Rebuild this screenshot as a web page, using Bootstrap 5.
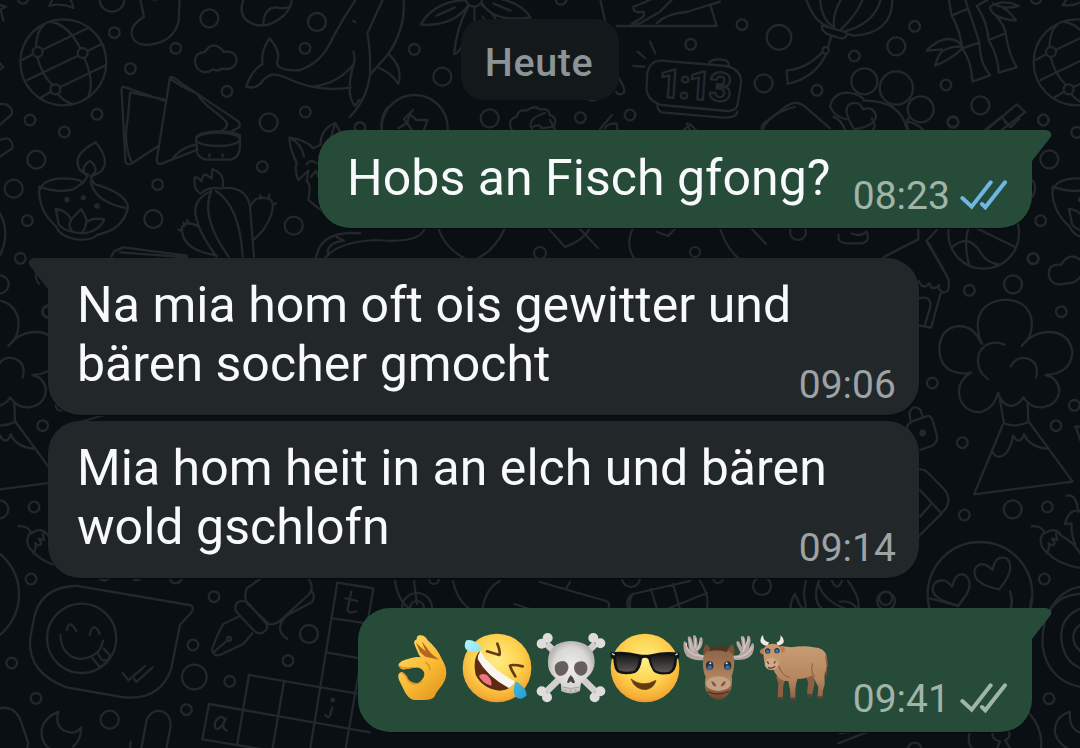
<!DOCTYPE html>
<html lang="de">
<head>
<meta charset="utf-8">
<meta name="viewport" content="width=device-width, initial-scale=1">
<title>Chat</title>
<link href="https://cdn.jsdelivr.net/npm/bootstrap@5.3.0/dist/css/bootstrap.min.css" rel="stylesheet">
<style>
  body { background: #0a0f13; font-family: Roboto, "Noto Sans", sans-serif; }
  .chat { width: 1080px; height: 748px; padding: 19px 48px 0; }
  .wallpaper { position: absolute; inset: 0; z-index: 0; }
  .chat > :not(.wallpaper) { z-index: 1; }
  .day { width: 158px; height: 81px; margin-left: 413px; border-radius: 23px; background: #13181b; color: #8b9498; font-size: 39.5px; font-weight: 500; letter-spacing: .6px; padding: 6px 2px 0 0; }
  .bubble { border-radius: 32px; color: #f7f9fa; font-size: 50px; letter-spacing: .04px; line-height: 59px; padding: 18px 23px 6px 29px; box-shadow: 0 1px 1px #070b0e; }
  .incoming { width: 871px; height: 157px; background: #22272a; }
  .outgoing { background: #274b39; }
  .tail-right { border-top-right-radius: 0; }
  .tail-left { border-top-left-radius: 0; }
  .tail { position: absolute; top: 0; }
  .tail-right .tail { left: calc(100% - 1px); }
  .tail-left .tail { right: calc(100% - 1px); }
  .clock-time { font-size: 39px; line-height: 47px; color: #9da2a5; }
  .incoming .clock-time { margin: 0 23px 6px 0; }
  .outgoing .clock-time { color: #a0b5a9; }
  .first-out { width: 714px; height: 98px; margin: 30px 0 30px; padding: 19px 24px 8px 29px; }
  .emoji-out { width: 674px; height: 124px; margin-top: 30px; padding: 22px 24px 9px 27px; }
  .ticks { margin-bottom: 5px; }
  .read { color: #6fb6e2; } .sent { color: #a0b5a9; }
</style>
</head>
<body class="m-0 overflow-hidden">
<main class="chat position-relative overflow-hidden d-flex flex-column">

<svg class="wallpaper" width="1080" height="748" viewBox="0 0 1080 748" fill="none" stroke="#24282c" stroke-width="6.9" stroke-linecap="round" stroke-linejoin="round" aria-hidden="true">
 <defs>
  <g id="globe"><circle cx="190" cy="187" r="129"/><circle cx="113" cy="156" r="15"/><circle cx="248" cy="159" r="15"/><circle cx="166" cy="268" r="15"/><path d="M68 179L98 163M128 149L262 85M82 240L234 167M262 153L304 133M122 293L152 275M181 261L314 197M108 141Q110 90 134 72M155 66Q205 75 241 145M112 171Q125 225 158 255M253 174Q285 245 264 292M174 282Q190 305 220 312"/></g>
  <g id="volcano"><path d="M244 340Q222 290 180 288Q120 292 118 358Q120 424 184 430Q202 431 213 427Q166 458 180 506Q198 550 244 546Q284 532 294 488Q304 524 334 528Q360 522 370 502Q392 534 426 532Q474 526 478 480Q472 442 437 435Q514 430 517 366Q508 304 440 306Q392 310 365 348Q402 320 394 264Q380 210 314 209Q238 216 233 282Q234 318 246 341M315 344Q260 324 237 370Q224 420 264 447M332 409Q350 376 384 386Q420 400 408 442M300 510L312 580Q348 594 385 576L383 520M308 585L222 793L518 755L387 576M277 664Q286 686 306 678Q330 668 339 616Q348 632 356 632Q368 630 372 612Q386 650 441 656"/></g>
  <g id="chili"><path d="M395 889Q425 886 434 910Q464 888 484 917Q542 948 562 1016Q480 1010 440 966Q420 950 422 928Q426 908 436 908M440 970Q450 955 446 940Q460 952 464 940L456 926L472 930L468 912"/></g>
  <g id="bowl"><path d="M118 575Q125 536 190 535Q240 536 247 548Q262 535 264 524Q230 515 233 482Q235 455 287 427Q320 466 314 495Q306 522 272 528Q276 546 286 553Q380 580 384 622Q370 690 290 705Q280 722 230 718Q180 710 169 680Q112 630 118 560Q170 580 220 568L252 546M272 545Q285 605 376 624M259 526Q240 508 263 487L271 483Q292 500 285 518L276 526M167 626Q200 632 214 658L243 627Q262 656 259 666Q280 652 313 658Q298 694 250 700Q190 696 176 672ZM214 658Q200 688 224 697M259 666Q256 688 246 697"/><g fill="#24282c" stroke="none"><circle cx="201" cy="599" r="8"/><circle cx="250" cy="593" r="8"/><circle cx="291" cy="618" r="8"/></g></g>
 </defs>

 <!-- upper left: globe, sandwiches, lamp, cactus, whale -->
 <g transform="scale(.33333)">
  <use href="#globe"/><use href="#bowl"/>
  <circle cx="343" cy="98" r="16"/><circle cx="336" cy="-2" r="37"/><circle cx="69" cy="-5" r="16"/><circle cx="391" cy="206" r="16"/><circle cx="527" cy="145" r="16"/><circle cx="628" cy="55" r="27"/><circle cx="681" cy="274" r="16"/><circle cx="806" cy="367" r="27"/><circle cx="915" cy="145" r="16"/><circle cx="951" cy="66" r="27"/><circle cx="916" cy="336" r="16"/><circle cx="291" cy="343" r="16"/><circle cx="90" cy="360" r="16"/><circle cx="193" cy="396" r="16"/><circle cx="109" cy="479" r="27"/><circle cx="41" cy="566" r="27"/><circle cx="82" cy="662" r="16"/><circle cx="473" cy="554" r="16"/><circle cx="460" cy="657" r="27"/><circle cx="787" cy="500" r="16"/><circle cx="881" cy="677" r="27"/><circle cx="61" cy="775" r="16"/><circle cx="1080" cy="383" r="16"/>
  <path d="M148 18Q184 8 220 24Q216 4 208-8M148 18L160-8M0 15L18 20L2 28L10 62M0 190L10 202L-10 215M0 312Q20 310 28 320Q40 330 34 344L0 374M0 420Q22 410 30 420Q42 432 36 446L0 470M0 640Q32 700 0 765"/>
  <path d="M420-5L432 50Q390 75 395 105Q406 140 450 134Q520 126 536 64L539-5M450-5Q465 2 480-5"/>
  <path d="M586 190Q580 160 614 156Q640 116 672 156Q708 150 710 182Q704 212 665 206Q655 216 640 208Q610 228 590 202Z"/>
  <path d="M732-5Q710 50 755 70Q800 90 850 48Q874 25 876-5M790 72Q792 22 830 22Q858 28 868 20"/>
  <path d="M739 260Q755 210 788 192Q780 160 808 115Q846 155 830 190Q840 215 900 210Q960 190 990 130Q1025 60 1072-8M739 260Q770 270 790 240Q815 212 855 232Q950 280 1052 262M940 260Q1020 248 1062 190Q1066 170 1060 155M1062 190Q1034 280 1065 318L1078 300"/>
  <path d="M495 299L390 277Q384 360 380 375Q372 440 396 490L475 438M495 303L370 260Q362 260 366 290L376 484Q380 498 395 490M510 232L470 480Q470 494 485 491L590 450M510 232Q518 226 540 247L712 362Q726 374 714 384L695 394M512 236Q540 260 590 280Q610 310 636 328Q690 370 680 374Q680 390 650 398M520 472Q550 440 588 434"/>
  <ellipse cx="654" cy="418" rx="66" ry="20"/><path d="M588 418Q588 395 654 394Q720 394 720 412M588 420L592 460Q600 480 630 479H690Q718 476 720 440V405M628 463V470M668 463V470"/>
  <path d="M634 573Q575 600 588 650Q598 700 650 770M660 565Q740 556 750 620L762 770M634 573Q600 650 686 770M648 573Q720 620 728 770M600 580Q580 570 584 532Q598 532 604 544Q610 518 620 525L635 536L637 507Q676 520 668 558M750 623Q765 580 812 599Q832 625 790 690L762 718M780 585L783 596M808 583L806 595M828 610L819 613M592 678Q560 660 546 682Q542 750 650 766M561 661L567 671M550 668L553 678M535 689L544 692M604 580Q622 560 660 565"/>
  <path d="M912 470Q905 430 868 413Q870 450 890 488Q882 510 895 540L925 512L920 545Q935 550 925 600Q950 620 975 640M868 413Q920 420 940 445L962 434Q960 390 1005 368L1020 395M1005 372Q990 420 985 440M920 492Q932 476 950 490M933 530L948 512L955 530M948 775Q960 690 1080 700M1010 711L1032 722Q975 730 985 765M334 770L342 754L370 742L560 767V775M360 757L560 772"/>
 </g>

 <!-- top centre: flower, star, clock -->
 <g transform="translate(360 0) scale(.33333)">
  <path d="M130-5Q140 80 85 162L30 224Q32 150 22 100L70-5M30 224Q20 300-30 350M85 162Q130 200 115 252Q95 220 58 204M-20 62L-15 66"/>
  <circle cx="163" cy="148" r="16"/><circle cx="247" cy="230" r="27"/><circle cx="603" cy="-2" r="16"/><circle cx="992" cy="133" r="16"/><circle cx="389" cy="355" r="27"/><circle cx="661" cy="353" r="16"/><circle cx="810" cy="345" r="16"/><circle cx="0" cy="383" r="16"/><circle cx="342" cy="-5" r="25"/><circle cx="164" cy="384" r="99"/>
  <path d="M316 0Q220 5 182 74Q280 80 326 15M365 7Q400 70 512 52Q480 5 410-5M343 20V65M325 20Q290 80 282 162Q300 160 320 110M365 15Q400 40 410 62M230 47L285 22M400 10L452 32M368 50L378 65"/>
  <path d="M115 385L142 368L148 342L170 360L203 360L192 390M455 390Q440 360 470 350Q476 326 500 332Q520 314 540 328Q570 324 568 344Q596 354 580 380L545 385Q540 370 520 380M735 385Q740 370 770 370L772 390M980 370L990 390"/>
  <path d="M720-5L735 62M770 78H1070L1052 18M820 20Q850 10 880-5M820 20Q820 42 850 35Q860 50 825 65Q800 80 840 70L900 35L940-5M890 70Q920 40 980 36L1080 5M776 235Q800 270 790 280Q775 288 768 275M680 295Q695 307 710 297"/>
  <path d="M870 125L886 160M833 155L855 174M820 198L854 200M905 182L1098 198Q1146 207 1143 252L1132 318Q1124 334 1100 333L905 315Q856 300 860 256L862 218Q872 180 905 182ZM892 317Q894 334 906 337L1080 352Q1130 356 1132 335M1048 187Q1060 174 1094 180Q1108 184 1106 198"/>
  <text x="0" y="0" transform="translate(893 290) rotate(4)" font-family="Roboto, sans-serif" font-size="120" font-weight="700" textLength="220">1:13</text>
 </g>

 <!-- upper right: lantern, bamboo, flower and globe -->
 <g transform="translate(720 0) scale(.33333)">
  <circle cx="66" cy="74" r="16"/><circle cx="177" cy="112" r="37"/><circle cx="131" cy="250" r="27"/><circle cx="291" cy="271" r="16"/><circle cx="403" cy="168" r="16"/><circle cx="529" cy="139" r="27"/><circle cx="584" cy="79" r="16"/><circle cx="678" cy="255" r="16"/><circle cx="781" cy="316" r="27"/><circle cx="699" cy="365" r="16"/><circle cx="948" cy="-5" r="16"/><circle cx="970" cy="360" r="16"/>
  <path d="M258-5Q280 65 325 80M300-5Q305 60 338 78M365-5Q335 45 343 82M430-5Q410 45 362 89M483-5Q465 70 375 94M517-5Q520 100 400 107L378 100M306 76Q300 100 350 111Q374 122 381 103L375 96Q320 80 306 76ZM333 112L324 142M306 158Q260 206 200 212L203 252Q285 234 318 163M124 385Q126 370 145 360L200 318Q230 298 255 320L330 385M330 318Q340 280 378 278Q410 278 430 296M330 318Q340 350 380 358M430 302Q540 300 560 385M565 365Q590 370 610 390"/>
  <circle cx="317" cy="151" r="10"/><circle cx="433" cy="244" r="39"/><circle cx="529" cy="264" r="50"/><circle cx="602" cy="328" r="39"/>
  <path d="M403 388Q360 320 396 310Q420 304 429 328Q460 318 468 346Q468 378 403 388M686-5L695 47L744 26L735-5M695 47Q720 90 727 145L778 128Q765 85 744 26M727 145Q755 185 757 245L810 226Q780 190 778 128M620 152Q670 100 715 125L727 140M620 152L665 148M727 140Q690 138 665 155Q655 165 645 197Q690 180 727 145M770 18L810-5M770 18Q800 60 806 120L857 100Q853 75 830 50M806 120Q835 170 836 218L890 202Q865 160 857 100M810 20Q850-5 897 18Q850 30 820 10M810 25Q820 55 888 62Q865 25 830 15"/>
  <path d="M800 390L890 313L916 336L845 390M845 350L868 378M1030 15Q1060 20 1085 5M1028 15L1045-10"/>
 </g>
 <use href="#globe" transform="translate(1013.3) scale(.33333)"/>

 <!-- right column: ball, cloud, tree and smile -->
 <g transform="translate(820 120) scale(.33333)"><circle cx="688" cy="118" r="27"/><circle cx="662" cy="302" r="16"/><circle cx="640" cy="416" r="16"/><circle cx="399" cy="7" r="16"/><circle cx="670" cy="0" r="16"/><circle cx="770" cy="37" r="16"/><circle cx="491" cy="340" r="106"/><path d="M75 30Q65 0 40-10M160 28Q170 15 155-5M265 30Q255 5 265-5M495 30L545-10M555 5L572 22L598-5M56 345Q50 370 85 370H125Q152 365 140 335Q120 352 95 340M470 325L584 380M445 325Q430 370 448 438M398 380Q445 340 480 395Q500 430 540 434M636 180Q655 200 636 232M295 325V358L190 412M320 362L350 330M320 365L370 448"/></g>
 <g transform="translate(1013.3) scale(.33333)"><use href="#bowl"/></g>
 <g transform="translate(900 230) scale(.33333)">
  <use href="#volcano"/><use href="#chili"/>
  <circle cx="399" cy="86" r="16"/><circle cx="339" cy="163" r="27"/><circle cx="208" cy="181" r="16"/><circle cx="484" cy="245" r="16"/><circle cx="97" cy="459" r="16"/><circle cx="187" cy="638" r="16"/><circle cx="523" cy="526" r="16"/><circle cx="468" cy="587" r="16"/><circle cx="193" cy="855" r="16"/><circle cx="338" cy="838" r="27"/><circle cx="442" cy="831" r="16"/><circle cx="433" cy="1047" r="16"/><circle cx="240" cy="1093" r="157"/>
  <path d="M-10 60L52 30M85 38L144 145Q154 185 130 188Q108 175 118 165Q96 186 88 160Q70 182 56 153M122 190L93 293L56 286M75 285L91 230Q94 196 56 205M548 95Q510 60 483 104Q442 100 447 138Q456 172 500 160Q524 162 540 142M32 575L28 550Q38 520 62 540L67 558M24 600Q15 586 36 575L78 559Q92 553 98 572L110 615Q116 636 95 648L60 660M60 718Q78 718 90 735L130 775Q156 805 138 835L125 850L55 920M60 780L124 850M60 860L94 822M527 590L548 650M525 590H548M500 797Q530 790 534 845M494 882Q510 830 545 845M494 882L515 880Q512 910 526 945M298 1078Q210 1060 226 1015Q245 988 278 1020Q285 974 320 985Q350 1015 298 1078ZM175 1126Q80 1105 102 1062Q130 1036 156 1070Q168 1022 196 1036Q230 1065 175 1126ZM330 1084Q338 1105 333 1138M450 1138Q488 1075 545 1070"/>
  <circle cx="68" cy="609" r="7" fill="#24282c"/>
 </g>

 <!-- left edge -->
 <g transform="translate(-113.3 230) scale(.33333)"><use href="#volcano"/><use href="#chili"/><circle cx="339" cy="163" r="27"/><circle cx="484" cy="245" r="16"/><circle cx="523" cy="526" r="16"/><circle cx="468" cy="587" r="16"/><circle cx="338" cy="838" r="27"/><circle cx="442" cy="831" r="16"/><circle cx="433" cy="1047" r="16"/><circle cx="240" cy="1093" r="157"/></g>
 <path stroke-width="2.2" d="M62 427L108 414M39 284Q34 278 37 272M48 305Q42 307 42 312Q43 317 48 318"/>

 <!-- lower left: speech bubble, pen, crossword, moon -->
 <g transform="translate(0 570) scale(.33333)">
  <circle cx="35" cy="279" r="16"/><circle cx="108" cy="385" r="16"/><circle cx="527" cy="22" r="18"/><circle cx="642" cy="80" r="16"/><circle cx="579" cy="225" r="16"/><circle cx="583" cy="321" r="37"/><circle cx="689" cy="334" r="16"/><circle cx="559" cy="419" r="16"/><circle cx="329" cy="449" r="27"/><circle cx="864" cy="272" r="16"/><circle cx="927" cy="192" r="27"/><circle cx="245" cy="205" r="104"/>
  <path d="M220 48Q115 55 100 155L90 210Q85 310 200 352L365 381Q480 395 514 295L540 165L576 125Q584 108 568 105L240 49Q230 47 220 48ZM181 195Q185 260 240 267Q300 262 309 212M200 180Q208 145 229 183M269 194Q282 150 299 192M277 264L297 288M293 248Q305 278 317 270M311 236L329 255Q328 280 297 290M368 309L385 331L435 288M402 326L409 336L458 292M300 27Q315 36 325 27M400 27Q410 33 420 27"/>
  <path d="M740 55Q728 90 750 108L806 162Q825 168 848 145L930 70Q942 52 926 25M740 55L780 27M710 100Q725 85 745 100L798 160Q808 176 790 187Q776 196 760 180L712 128Q700 115 710 100ZM715 140L670 162Q650 195 636 240Q640 260 660 255L730 222L757 190M640 248L683 210M932 60Q950 78 935 97L858 138Q820 180 862 206"/><circle cx="687" cy="207" r="6"/>
  <path d="M125 495Q120 450 175 425Q160 480 215 488Q235 486 243 472Q245 505 220 530M125 495Q130 525 150 537M-5 415Q45 405 63 455L85 520L80 540M423 540L440 450Q455 415 490 425Q518 440 510 480L498 540M392 516L390 540"/>
  <path d="M1012 38L930 540M1120 57L1036 540M1012 38L1115 54M998 145L1100 160M979 247L1080 265M747 315L1085 373M627 402L1110 487M607 508L800 540M747 315L712 520M852 335L817 540M627 402L607 508"/>
  <path d="M1054 64L1042 120Q1046 132 1068 124M1036 85L1072 93M997 412L990 437Q984 446 976 435M672 446Q660 432 646 455Q640 480 656 476Q670 466 678 445Q660 472 680 482"/><circle cx="998" cy="390" r="4"/>
 </g>

 <!-- bands between the message bubbles -->
 <g stroke-width="2.2"><path d="M395 581Q398 604 416 613M414 581L417 604M453 581Q458 607 482 615M482 614Q484 589 500 581M540 582L606 601Q612 604 607 610L600 616M570 582L566 589M514 604L565 620M629 612Q624 598 633 594L690 581M633 594Q627 602 632 616M651 589L659 616M673 584L682 616M635 622L707 593M700 581Q711 598 706 611M792 616Q788 604 795 594Q803 615 806 606Q802 594 806 581M819 581Q810 605 828 612M818 583Q824 601 844 608L852 616M832 581Q837 592 842 581M848 581Q864 602 856 616"/><circle cx="417" cy="608" r="15"/><circle cx="417" cy="608" r="7"/><circle cx="762" cy="586" r="9"/><circle cx="886" cy="601" r="9"/><circle cx="730" cy="614" r="5"/><circle cx="631" cy="578" r="9"/><circle cx="718" cy="578" r="5"/><circle cx="434" cy="579" r="5"/>
 <path d="M325 258Q338 242 375 240Q420 244 425 228M438 228Q445 248 464 258M505 228Q495 250 478 258M548 228L565 247Q584 240 590 228M579 228L598 248M633 228Q625 245 634 258M657 232L668 236L676 228M720 228Q725 246 738 258M751 228L766 244"/><circle cx="798" cy="232" r="8"/><circle cx="540" cy="253" r="6"/><circle cx="695" cy="252" r="5"/>
 <path d="M382 130Q379 118 388 107M412 130L404 119L413 110M532 129Q526 119 545 113M555 130L550 120M600 129L612 115M684 130L690 124L696 130M763 129Q770 113 795 107"/></g>

 <!-- lower right -->
 <g transform="translate(840 600) scale(.33333)"><circle cx="627" cy="296" r="16"/><circle cx="137" cy="-5" r="20"/><circle cx="224" cy="448" r="20"/><path d="M740-20Q600-20 608 140Q625 250 740 264M740 20Q660 40 664 118Q672 195 740 210M720 75Q690 95 705 135L722 155M690 335Q642 350 645 400Q655 430 680 444M690 335Q685 400 740 400M568 340Q610 390 603 444M388 400Q382 430 396 444M460 396Q450 415 480 425L472 444M505 390Q515 415 495 420L510 444M-5 430L85 395M0 400L28 396M270-5L355 18L370-5M515-5Q518 10 512 24M575-5Q570 10 572 24M0 5Q30 0 48 22"/></g>
</svg>

<div class="day position-relative d-flex align-items-center justify-content-center flex-shrink-0">Heute</div>

<section class="bubble outgoing first-out tail-right position-relative align-self-end d-flex justify-content-between align-items-end flex-shrink-0">
  <div class="align-self-start text-nowrap">Hobs an Fisch gfong?</div>
  <div class="d-flex align-items-center gap-2 read"><span class="clock-time">08:23</span>
  <svg class="ticks" width="50" height="32" viewBox="0 0 150 96" fill="none" stroke="currentColor" stroke-width="12"><path d="M13 60L41 86L98 13M72 78L82 88L141 13" stroke-linecap="round"/></svg></div>
  <svg class="tail" width="22" height="32" viewBox="0 0 22 32" fill="#274b39"><path d="M0 0H15Q23 2 19 8L1 31H0Z"/></svg>
</section>

<section class="bubble incoming tail-left position-relative d-flex justify-content-between align-items-end flex-shrink-0">
  <div class="align-self-start text-nowrap">Na mia hom oft ois gewitter und<br>bären socher gmocht</div>
  <span class="clock-time position-absolute bottom-0 end-0">09:06</span>
  <svg class="tail" width="22" height="32" viewBox="0 0 22 32" fill="#22272a"><path d="M22 0H7Q-1 2 3 8L21 31H22Z"/></svg>
</section>

<section class="bubble incoming position-relative d-flex flex-shrink-0" style="margin-top:6px">
  <div class="text-nowrap">Mia hom heit in an elch und bären<br>wold gschlofn</div>
  <span class="clock-time position-absolute bottom-0 end-0">09:14</span>
</section>

<section class="bubble outgoing emoji-out tail-right position-relative align-self-end d-flex justify-content-between align-items-end flex-shrink-0">
  <div class="d-flex align-self-start">
   <!-- OK hand -->
   <svg width="74" height="76" viewBox="15 30 222 228" role="img" aria-label="OK-Hand"><defs><linearGradient id="hand" x1="0" y1="0" x2=".7" y2="1"><stop stop-color="#ffd967"/><stop offset=".6" stop-color="#fbbd35"/><stop offset="1" stop-color="#e79b20"/></linearGradient></defs><path fill-rule="evenodd" d="M117 105L105 77Q98 62 110 58Q110 44 122 46Q135 46 143 61Q172 85 187 120Q199 139 199 161Q197 184 179 205Q168 218 163 231Q155 240 132 240H101Q83 235 72 211L57 180Q50 160 64 156Q74 157 80 173Q95 192 117 188Q134 175 133 160Q132 149 116 143Q100 142 77 148Q60 151 55 135Q57 122 94 114Q111 110 122 112Z" fill="url(#hand)"/><path d="M57 138Q70 149 98 142M66 158Q80 165 85 184Q104 200 126 184M137 127Q154 139 148 151" fill="none" stroke="#d98f2b" stroke-width="4"/><path d="M108 68L120 96L136 110L178 119Q154 105 141 84L125 64Q132 84 138 94Q124 84 108 68Z" fill="#b4651f"/></svg>
   <!-- laughing face -->
   <svg width="74" height="76" viewBox="237 30 222 228" role="img" aria-label="Lachen"><defs><radialGradient id="sun" cx=".5" cy=".38" r=".65"><stop stop-color="#ffed85"/><stop offset=".55" stop-color="#fdd14d"/><stop offset=".87" stop-color="#f6ad34"/><stop offset="1" stop-color="#e88d26"/></radialGradient><linearGradient id="tear" x2="1" y2="1"><stop stop-color="#b2f4ff"/><stop offset=".5" stop-color="#61cfe9"/><stop offset="1" stop-color="#259dd0"/></linearGradient></defs><circle cx="351" cy="144" r="103" fill="url(#sun)"/><path d="M298 94Q335 154 403 188Q390 211 359 212Q306 205 287 164Q277 119 298 94Z" fill="#5d2a14"/><path d="M301 93Q293 104 293 117Q320 168 386 204Q399 200 405 184Q334 148 301 93Z" fill="#f8f5ef"/><path d="M297 168Q303 159 320 164Q337 178 334 197Q307 191 297 168Z" fill="#ed7781"/><path d="M321 94L358 105Q362 96 352 71M428 139Q399 132 390 137Q393 148 406 169" fill="none" stroke="#683916" stroke-width="8" stroke-linecap="round" stroke-linejoin="round"/><path d="M307 85Q281 54 259 61Q247 82 265 94Q283 101 307 85ZM407 184Q439 202 440 225Q424 244 407 231Q395 218 407 184Z" fill="url(#tear)"/></svg>
   <!-- skull and crossbones -->
   <svg width="74" height="76" viewBox="459 30 222 228" role="img" aria-label="Totenkopf"><defs><radialGradient id="bone"><stop stop-color="#f0eeec"/><stop offset=".75" stop-color="#dad8d5"/><stop offset="1" stop-color="#b8b7b3"/></radialGradient></defs><g fill="none" stroke="#d2cfcc" stroke-width="20"><path d="M500 72L646 214M646 72L500 214"/></g><g fill="#dfdddb"><circle cx="503" cy="54" r="15"/><circle cx="485" cy="71" r="15"/><circle cx="640" cy="54" r="15"/><circle cx="661" cy="70" r="15"/><circle cx="485" cy="214" r="15"/><circle cx="501" cy="232" r="15"/><circle cx="661" cy="214" r="15"/><circle cx="644" cy="232" r="15"/></g><path d="M504 126Q502 67 573 63Q644 67 644 126Q644 154 622 172Q606 180 602 194L600 213Q574 227 544 214L543 194Q538 180 523 172Q502 154 504 126Z" fill="url(#bone)"/><g fill="#675f5d"><path d="M524 143Q525 123 551 123Q566 127 565 145Q561 166 540 168Q524 163 524 143Z"/><path d="M582 144Q582 123 607 124Q625 128 622 151Q615 169 600 167Q584 162 582 144Z"/><path d="M572 165Q563 175 561 187Q565 192 572 184Q580 194 585 187Q583 174 572 165Z" fill="#494341"/></g><path d="M548 201Q572 210 598 201M557 207V218M572 208V221M587 207V218" stroke="#aba39e" stroke-width="3" fill="none"/></svg>
   <!-- sunglasses face -->
   <svg width="74" height="76" viewBox="21 30 222 228" role="img" aria-label="Sonnenbrille"><defs><linearGradient id="lens" x2="0" y2="1"><stop stop-color="#191919"/><stop offset="1" stop-color="#5a5754"/></linearGradient></defs><circle cx="135" cy="144" r="103" fill="url(#sun)"/><path d="M31 98Q74 91 116 103Q135 106 154 103Q194 92 238 98V112L231 117Q230 155 209 162Q171 167 160 154Q149 137 145 117Q136 110 126 116Q122 151 105 159Q72 167 52 157Q42 149 40 118L32 112Z" fill="#111416"/><path d="M48 108Q84 101 116 112Q115 148 98 154Q70 158 57 151Q49 142 48 108ZM153 112Q190 100 223 108Q223 148 207 155Q182 160 166 151Q156 140 153 112Z" fill="url(#lens)"/><path d="M93 177Q128 204 168 181Q162 205 137 209Q105 209 93 177Z" fill="#623b14" stroke="#623b14" stroke-width="2" stroke-linejoin="round"/><path d="M36 101L44 105M233 101L226 105" stroke="#ddd" stroke-width="4"/></svg>
   <!-- moose -->
   <svg width="74" height="76" viewBox="243 30 222 228" role="img" aria-label="Elch"><defs><linearGradient id="fur" x2="0" y2="1"><stop stop-color="#8b6244"/><stop offset=".6" stop-color="#b18660"/><stop offset="1" stop-color="#6d402c"/></linearGradient></defs><path d="M318 119Q284 126 260 109Q248 92 251 66Q256 57 261 80L267 88L263 53Q269 43 275 58L281 79L279 47Q288 42 291 59L294 83L299 55Q308 46 308 65Q307 83 293 94Q295 108 319 104ZM391 104Q419 112 421 97L410 74Q407 58 418 66L427 83L422 51Q431 42 435 58L438 80L442 49Q450 43 452 62L447 87L456 70Q465 68 461 91Q455 113 434 118Q410 123 391 117Z" fill="#b8a7a0"/><path d="M259 68Q256 91 282 104L312 110M269 57Q270 81 282 95M287 55L285 85M302 65L291 90M456 82Q445 104 422 110L395 112M445 58L429 96M430 56L433 89" stroke="#d3c7c2" stroke-width="4" fill="none"/><path d="M313 111Q304 91 318 73Q336 83 334 107ZM399 111Q409 92 398 73Q380 84 379 106Z" fill="#7d4f32"/><path d="M309 119Q311 94 333 90Q357 78 382 90Q402 96 403 126Q402 152 395 170Q399 192 391 213Q376 240 355 240Q334 238 318 213Q312 194 317 171Q307 149 309 119Z" fill="url(#fur)"/><path d="M328 94Q328 79 347 81Q358 70 378 80Q386 90 380 96Q355 86 328 94Z" fill="#503522"/><ellipse cx="355" cy="191" rx="37" ry="22" fill="#c5a083"/><path d="M334 184Q344 184 349 199Q337 201 334 184M377 184Q367 184 362 199Q375 200 377 184" fill="#775645"/><ellipse cx="329" cy="137" rx="11" ry="13" fill="#26303b"/><ellipse cx="383" cy="137" rx="11" ry="13" fill="#26303b"/><circle cx="329" cy="143" r="7" fill="#356eb0"/><circle cx="383" cy="143" r="7" fill="#356eb0"/><circle cx="331" cy="130" r="3" fill="#e8eef2"/><circle cx="380" cy="130" r="3" fill="#e8eef2"/><path d="M323 215Q356 229 388 214" fill="none" stroke="#593528" stroke-width="5"/></svg>
   <!-- ox -->
   <svg width="74" height="76" viewBox="465 30 222 228" role="img" aria-label="Ochse"><defs><linearGradient id="hide" x2="0" y2="1"><stop stop-color="#c79c74"/><stop offset=".65" stop-color="#b4855e"/><stop offset="1" stop-color="#8d6245"/></linearGradient></defs><path d="M616 165L624 186L621 224L635 229L644 190L641 158ZM528 170L535 190L533 232L548 235L550 196L558 171Z" fill="#8e6042"/><path d="M543 78Q560 80 575 82Q612 76 641 82Q674 83 680 110Q685 139 678 152Q672 160 674 180Q676 195 669 211L667 232L652 231Q655 211 655 201Q645 181 637 166Q620 177 592 177Q587 192 586 210L586 235L571 236Q572 216 568 198L565 183Q538 184 527 161Q517 150 526 136Q510 118 524 91Z" fill="url(#hide)"/><path d="M503 78Q487 76 482 67Q479 52 489 45Q489 64 507 67ZM530 67Q544 64 541 45Q555 57 550 69Q545 75 532 77Z" fill="#eee9e5"/><path d="M502 85Q485 81 479 94Q481 106 501 104M532 84Q550 75 556 88Q551 103 533 99" fill="#b87b52"/><path d="M493 83Q506 66 532 73Q545 83 545 101Q544 118 539 134Q530 149 514 149Q497 144 494 128Q488 108 493 83Z" fill="#c5976f"/><ellipse cx="514" cy="132" rx="20" ry="18" fill="#d1aa8c"/><circle cx="503" cy="93" r="8" fill="#23374a"/><circle cx="531" cy="92" r="8" fill="#23374a"/><circle cx="503" cy="94" r="5" fill="#427aa8"/><circle cx="531" cy="93" r="5" fill="#427aa8"/><path d="M502 124L506 132M526 123L522 131M504 142Q514 149 526 139" stroke="#694631" stroke-width="4" fill="none"/><path d="M533 231L548 231L550 238H532ZM570 233H587V242H574ZM621 221H635V231H621ZM653 229H668V237H655Z" fill="#514241"/><path d="M536 137Q545 167 568 172M677 107Q684 135 678 167M638 130Q630 154 644 171" stroke="#875b3e" stroke-width="3" fill="none"/></svg>
  </div>
  <div class="d-flex align-items-center gap-2 sent"><span class="clock-time">09:41</span>
  <svg class="ticks" width="50" height="32" viewBox="0 0 150 96" fill="none" stroke="currentColor" stroke-width="12"><path d="M13 60L41 86L98 13M72 78L82 88L141 13" stroke-linecap="round"/></svg></div>
  <svg class="tail" width="22" height="32" viewBox="0 0 22 32" fill="#274b39"><path d="M0 0H15Q23 2 19 8L1 31H0Z"/></svg>
</section>
</main>
<script src="https://cdn.jsdelivr.net/npm/bootstrap@5.3.0/dist/js/bootstrap.bundle.min.js"></script>
</body>
</html>
